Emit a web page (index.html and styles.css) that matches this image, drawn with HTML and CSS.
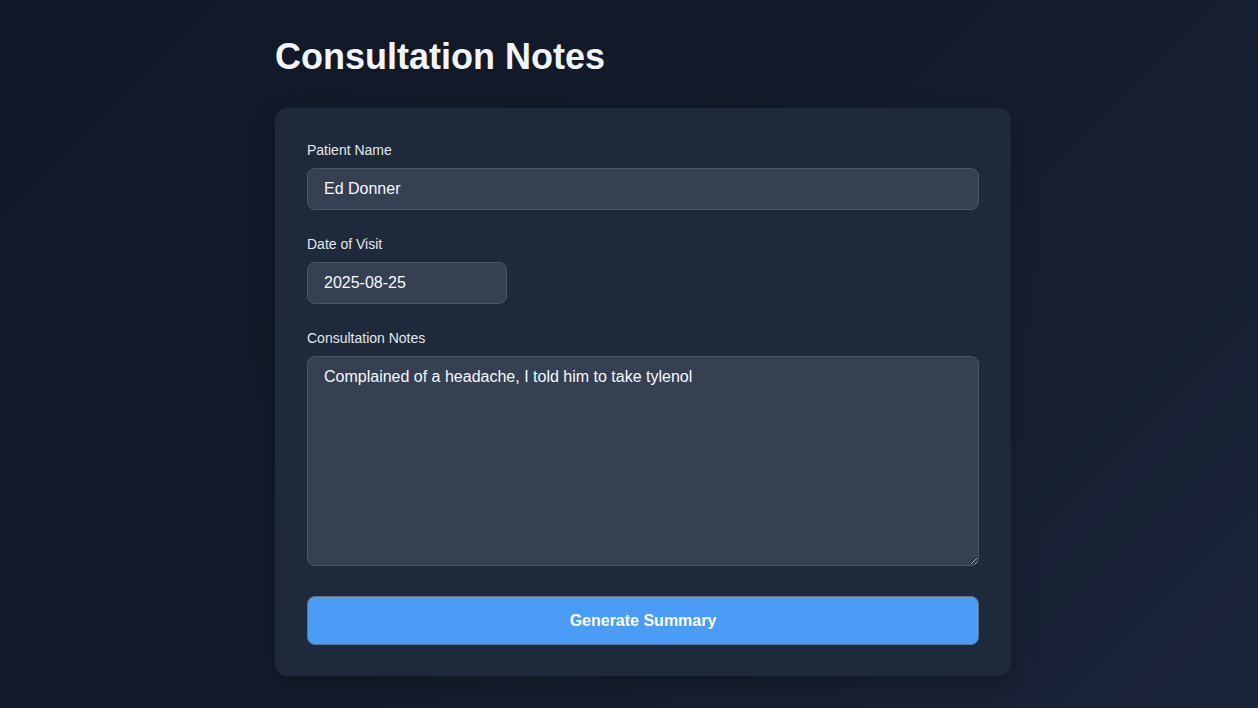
FILE: index.html
```html
<!DOCTYPE html>
<html lang="en">
<head>
<meta charset="utf-8">
<title>Consultation Notes</title>
<link rel="stylesheet" href="styles.css">
</head>
<body>
<main class="container">
  <h1 class="title">Consultation Notes</h1>
  <form class="card">
    <div class="group">
      <label class="label" for="name">Patient Name</label>
      <input class="field" id="name" type="text" value="Ed Donner">
    </div>
    <div class="group">
      <label class="label" for="date">Date of Visit</label>
      <input class="field field-date" id="date" type="text" value="2025-08-25">
    </div>
    <div class="group">
      <label class="label" for="notes">Consultation Notes</label>
      <textarea class="field field-area" id="notes">Complained of a headache, I told him to take tylenol</textarea>
    </div>
    <button class="btn" type="button">Generate Summary</button>
  </form>
</main>
</body>
</html>
```

FILE: styles.css
```css
* { box-sizing: border-box; }
html, body { height: 100%; }
body {
  margin: 0;
  font-family: "Liberation Sans", Arial, sans-serif;
  color: #f1f5f9;
  background: linear-gradient(135deg, #111827 0%, #131b2b 45%, #1b253a 100%);
}
.container {
  width: 736px;
  margin-left: 275px;
  padding-top: 35px;
}
.title {
  margin: 0 0 30px 0;
  font-size: 36px;
  line-height: 43px;
  font-weight: 700;
  color: #f1f5f9;
}
.card {
  background: #1e293b;
  border-radius: 12px;
  padding: 32px 32px 31px;
  box-shadow: 0 10px 25px rgba(0,0,0,0.25);
}
.group {
  margin-bottom: 24px;
}
.label {
  display: block;
  font-size: 14px;
  line-height: 20px;
  color: #e2e8f0;
  margin-bottom: 8px;
}
.field {
  display: block;
  width: 100%;
  height: 42px;
  padding: 0 16px;
  font-family: "Liberation Sans", Arial, sans-serif;
  font-size: 16px;
  color: #f8fafc;
  background: #354053;
  border: 1px solid #4b5668;
  border-radius: 8px;
  outline: none;
}
.field-date { width: 200px; }
.field-area {
  height: 210px;
  padding: 10px 16px;
  line-height: 20px;
  resize: vertical;
  margin-bottom: 30px;
}
.group:last-of-type { margin-bottom: 0; }
.btn {
  display: block;
  width: 100%;
  height: 49px;
  background: #4a9cf7;
  color: #ffffff;
  font-family: "Liberation Sans", Arial, sans-serif;
  font-size: 16px;
  font-weight: 700;
  border: 1px solid #64748b;
  border-radius: 8px;
  cursor: pointer;
}
```
